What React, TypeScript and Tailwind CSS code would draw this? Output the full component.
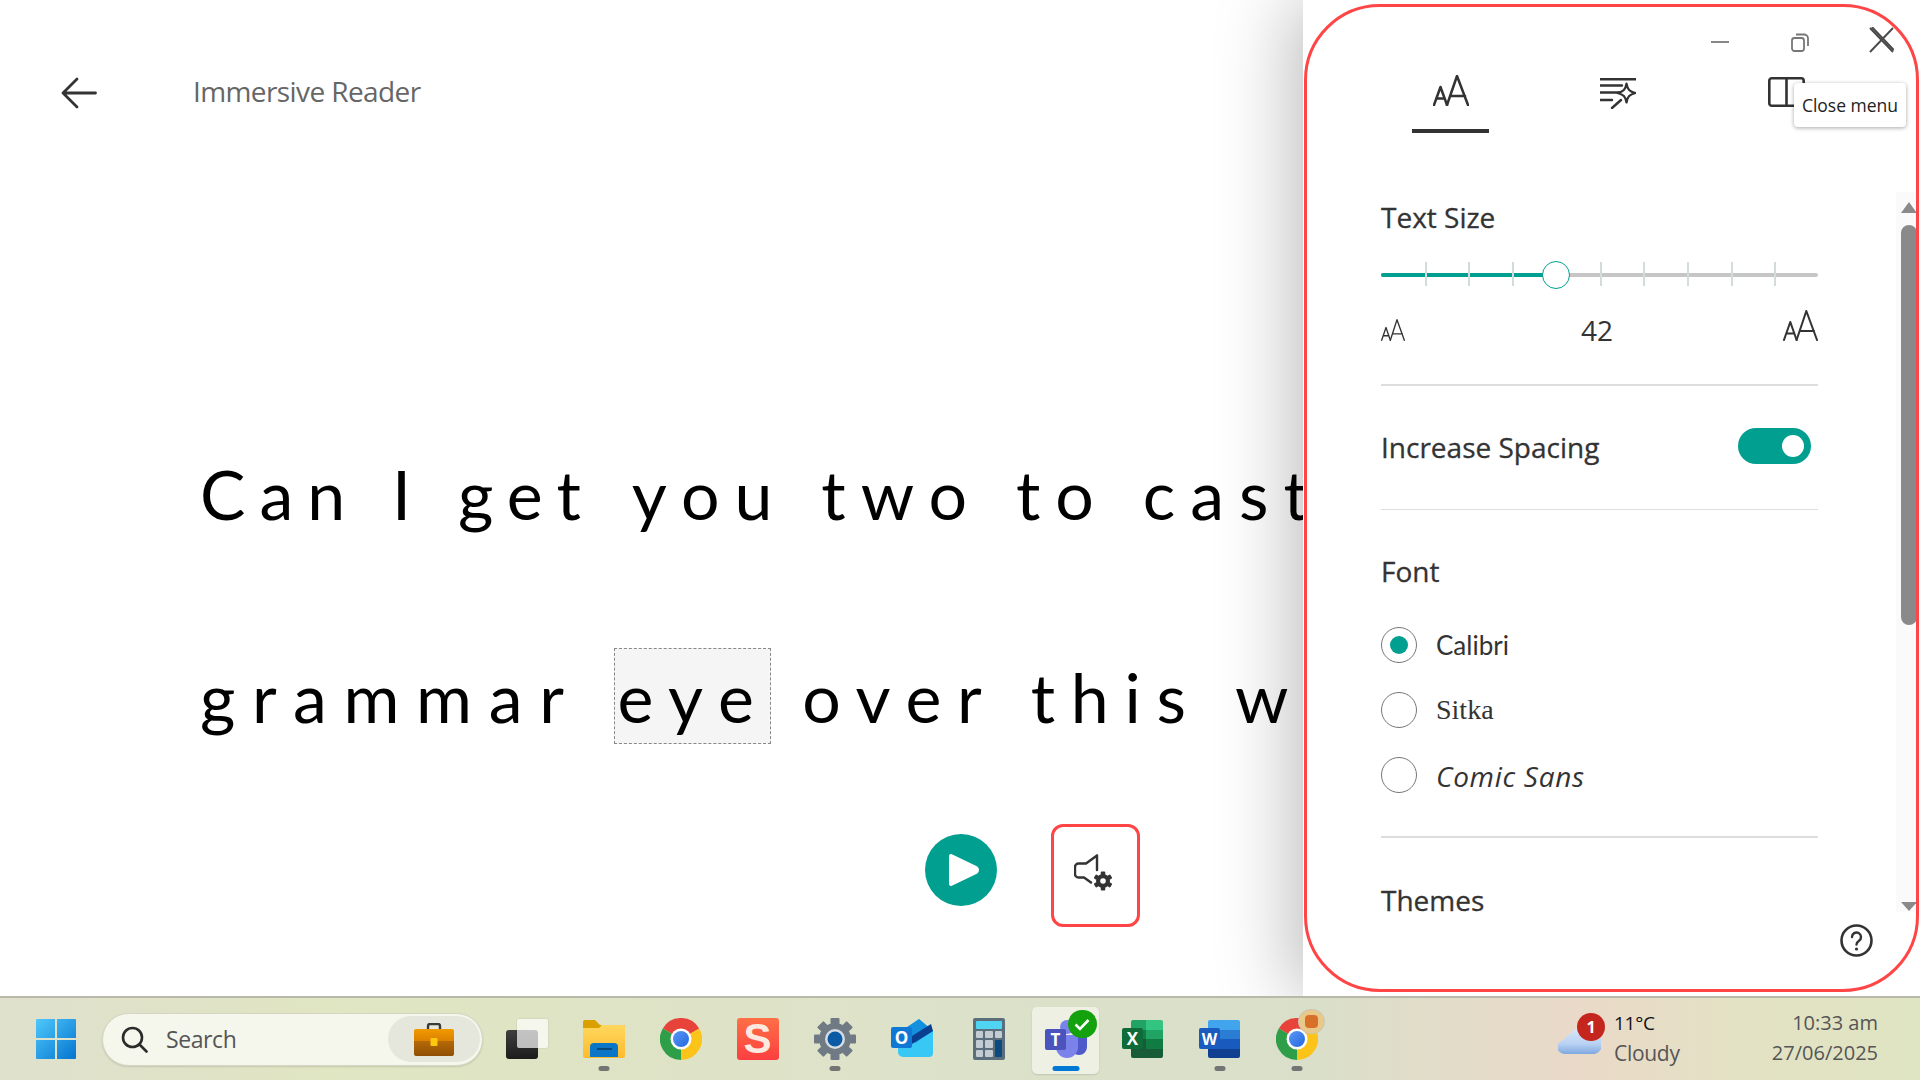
import type { ReactNode } from 'react';

const uiFont = "font-['Open_Sans',sans-serif]";
const heading = 'text-[28px] leading-[36px] font-medium text-[#333] [-webkit-text-stroke:0.3px_#333]';

function AaIcon({ w, h, sw = 2.5, color = '#333' }: { w: number; h: number; sw?: number; color?: string }) {
  return (
    <svg width={w} height={h} viewBox="0 0 36 31" fill="none" stroke={color} strokeWidth={sw} strokeLinecap="round" strokeLinejoin="round" preserveAspectRatio="none">
      <path d="M14 30 24 1l11 29M17.5 21H32" />
      <path d="M1 30 7.5 12 14 30M3.5 23.5H11.5" />
    </svg>
  );
}

function SparkleListIcon() {
  return (
    <svg width="36" height="31" viewBox="0 0 36 31" fill="none" stroke="#333" strokeWidth="2.4" strokeLinecap="round">
      <path d="M0 1.2H36M0 7.5H22M0 14.5H20M0 22H12M12 30 21 22" />
      <path d="M26.5 5.5C27.5 11.5 29.5 13.6 35.5 15 29.5 16.4 27.5 18.5 26.5 24.5 25.5 18.5 23.5 16.4 17.5 15 23.5 13.6 25.5 11.5 26.5 5.5Z" strokeWidth="2.2" strokeLinejoin="round" fill="#fff" />
    </svg>
  );
}

function BookIcon() {
  return (
    <svg width="37" height="30" viewBox="0 0 37 30" fill="none" stroke="#333" strokeWidth="2.6">
      <rect x="1.3" y="1.3" width="34.4" height="27.4" rx="2.5" />
      <path d="M18.5 1.3V28.7" />
    </svg>
  );
}

function Gear({ cx, cy, r, teeth, toothW, toothH, fill }: { cx: number; cy: number; r: number; teeth: number; toothW: number; toothH: number; fill: string }) {
  const angles = Array.from({ length: teeth }, (_, i) => (360 / teeth) * i);
  return (
    <g fill={fill}>
      <circle cx={cx} cy={cy} r={r} />
      {angles.map((a) => (
        <rect key={a} x={cx - toothW / 2} y={cy - r - toothH + 1} width={toothW} height={toothH} rx="1" transform={`rotate(${a} ${cx} ${cy})`} />
      ))}
    </g>
  );
}

function SpeakerGearIcon() {
  return (
    <svg width="40" height="37" viewBox="0 0 40 37" fill="none">
      <path d="M23 1.5V16M23 1.5 12 9.5H4.5a3.5 3.5 0 0 0-3.5 3.5V20a3.5 3.5 0 0 0 3.5 3.5H10L17 28.5" stroke="#333" strokeWidth="2.4" strokeLinecap="round" strokeLinejoin="round" />
      <Gear cx={29} cy={27} r={7} teeth={6} toothW={4.5} toothH={3.5} fill="#333" />
      <circle cx="29" cy="27" r="2.8" fill="#fff" />
    </svg>
  );
}

function WindowsIcon() {
  return (
    <svg width="40" height="40" viewBox="0 0 40 40">
      <defs>
        <linearGradient id="win" x1="0" y1="0" x2="1" y2="1">
          <stop offset="0" stopColor="#4fc8fb" />
          <stop offset="1" stopColor="#0474cf" />
        </linearGradient>
      </defs>
      <path d="M1 0H19V19H0V1a1 1 0 0 1 1-1ZM21 0H39a1 1 0 0 1 1 1V19H21ZM0 21H19V40H1a1 1 0 0 1-1-1ZM21 21H40V39a1 1 0 0 1-1 1H21Z" fill="url(#win)" />
    </svg>
  );
}

function BriefcaseIcon() {
  return (
    <svg width="40" height="33" viewBox="0 0 40 33">
      <defs>
        <linearGradient id="caseTop" x1="0" y1="0" x2="0" y2="1">
          <stop offset="0" stopColor="#f09a00" />
          <stop offset="1" stopColor="#d97c00" />
        </linearGradient>
        <linearGradient id="caseBottom" x1="0" y1="0" x2="0" y2="1">
          <stop offset="0" stopColor="#b66a06" />
          <stop offset="1" stopColor="#8f4f05" />
        </linearGradient>
      </defs>
      <path d="M14 6V3a2 2 0 0 1 2-2h8a2 2 0 0 1 2 2v3" fill="none" stroke="#3a3a3a" strokeWidth="2.4" />
      <rect x="0" y="6" width="40" height="14" rx="2" fill="url(#caseTop)" />
      <path d="M0 18H40V31a2 2 0 0 1-2 2H2a2 2 0 0 1-2-2Z" fill="url(#caseBottom)" />
      <rect x="16.5" y="15" width="7" height="8" rx="1" fill="#fbc80e" />
    </svg>
  );
}

function TaskViewIcon() {
  return (
    <div className="relative w-[42px] h-[40px]">
      <div className="absolute left-0 bottom-0 w-[32px] h-[29px] rounded-[3px] bg-[linear-gradient(180deg,#3f3f3f,#1c1c1c)]" />
      <div className="absolute right-0 top-0 w-[31px] h-[29px] rounded-[2px] bg-[#ffffffb0] shadow-[0_0_2px_rgba(0,0,0,0.15)]" />
    </div>
  );
}

function FolderIcon() {
  return (
    <svg width="42" height="38" viewBox="0 0 42 38">
      <defs>
        <linearGradient id="folder" x1="0" y1="0" x2="0" y2="1">
          <stop offset="0" stopColor="#ffd75e" />
          <stop offset="1" stopColor="#fdbb2d" />
        </linearGradient>
      </defs>
      <path d="M0 2a2 2 0 0 1 2-2H12L17 5H40a2 2 0 0 1 2 2V10H0Z" fill="#d9a000" />
      <path d="M0 8H16L19 5H40a2 2 0 0 1 2 2V36a2 2 0 0 1-2 2H2a2 2 0 0 1-2-2Z" fill="url(#folder)" />
      <path d="M7 38V28a4 4 0 0 1 4-4H31a4 4 0 0 1 4 4V38Z" fill="#0b76c5" transform="translate(0 -1)" />
      <rect x="14" y="28" width="15" height="2" fill="#06487c" />
    </svg>
  );
}

function ChromeIcon({ id }: { id: string }) {
  return (
    <svg width="42" height="42" viewBox="0 0 42 42">
      <defs>
        <linearGradient id={`${id}b`} x1="0" y1="0" x2="1" y2="1">
          <stop offset="0" stopColor="#5a97f5" />
          <stop offset="1" stopColor="#2368e0" />
        </linearGradient>
      </defs>
      <path d="M21 21 2.8 10.5A21 21 0 0 1 39.2 10.5Z" fill="#e8433a" />
      <path d="M21 21 39.2 10.5A21 21 0 0 1 21 42Z" fill="#fcc419" />
      <path d="M21 21 21 42A21 21 0 0 1 2.8 10.5Z" fill="#2f9e48" />
      <circle cx="21" cy="21" r="10.5" fill="#fff" />
      <circle cx="21" cy="21" r="8" fill={`url(#${id}b)`} />
    </svg>
  );
}

function SnagIcon() {
  return (
    <div className="w-[42px] h-[42px] rounded-[3px] bg-[linear-gradient(180deg,#ff6f47,#fb3f3f)] flex items-center justify-center">
      <span className="font-['Liberation_Sans',sans-serif] font-bold text-[42px] leading-none text-[#fde9e0]">S</span>
    </div>
  );
}

function SettingsIcon() {
  return (
    <svg width="42" height="42" viewBox="0 0 42 42">
      <Gear cx={21} cy={21} r={16} teeth={8} toothW={9} toothH={6} fill="#6f7a85" />
      <circle cx="21" cy="21" r="10" fill="#d5dde2" />
      <circle cx="21" cy="21" r="7.5" fill="#0a5aa5" />
    </svg>
  );
}

function OutlookIcon() {
  return (
    <svg width="42" height="40" viewBox="0 0 42 40">
      <path d="M7 20 28 0l14 12v22a4 4 0 0 1-4 4H12a5 5 0 0 1-5-5Z" fill="#38c8f5" />
      <path d="M13 10 28 0 42 12 24 24Z" fill="#1490df" />
      <path d="M21 17 40 5 42 12 21 25Z" fill="#0a3f8f" />
      <rect x="0" y="8" width="21" height="21" rx="2" fill="#0f78d4" />
      <text x="10.5" y="24.5" textAnchor="middle" fontSize="17" fontWeight="700" fill="#fff" fontFamily="Open Sans, sans-serif">O</text>
    </svg>
  );
}

function CalcIcon() {
  const keys = Array.from({ length: 6 }, (_, i) => i);
  return (
    <div className="w-[32px] h-[42px] rounded-[2px] bg-[#5c6d7c] p-[3px] flex flex-col gap-[2px]">
      <div className="h-[8px] bg-[#4fd4f2] rounded-[1px]" />
      <div className="flex-1 flex gap-[2px]">
        <div className="flex-1 grid grid-cols-2 grid-rows-3 gap-[2px]">
          {keys.map((k) => <div key={k} className="bg-[#c4ccd3] rounded-[1px]" />)}
        </div>
        <div className="w-[7px] flex flex-col gap-[2px]">
          <div className="h-[7px] bg-[#c4ccd3] rounded-[1px]" />
          <div className="flex-1 bg-[#0c4a80] rounded-[1px]" />
        </div>
      </div>
    </div>
  );
}

function TeamsIcon() {
  return (
    <svg width="42" height="38" viewBox="0 0 42 38">
      <circle cx="33" cy="9" r="5" fill="#5059c9" />
      <path d="M26 15H42V27a8 8 0 0 1-16 0Z" fill="#5059c9" />
      <circle cx="22" cy="7" r="7" fill="#7b83eb" />
      <path d="M11 15H33V27a11 11 0 0 1-22 0Z" fill="#7b83eb" />
      <rect x="0" y="9" width="21" height="21" rx="2" fill="#4b53bc" />
      <text x="10.5" y="25.5" textAnchor="middle" fontSize="17" fontWeight="700" fill="#fff" fontFamily="Open Sans, sans-serif">T</text>
    </svg>
  );
}

function ExcelIcon() {
  return (
    <svg width="41" height="38" viewBox="0 0 41 38">
      <path d="M9 2a2 2 0 0 1 2-2H24V10H9Z" fill="#21a366" />
      <path d="M24 0H39a2 2 0 0 1 2 2V10H24Z" fill="#33c481" />
      <rect x="9" y="10" width="32" height="9" fill="#107c41" />
      <rect x="24" y="10" width="17" height="9" fill="#21a366" />
      <rect x="9" y="19" width="15" height="10" fill="#185c37" />
      <rect x="24" y="19" width="17" height="10" fill="#107c41" />
      <path d="M9 29H41V36a2 2 0 0 1-2 2H11a2 2 0 0 1-2-2Z" fill="#185c37" />
      <rect x="0" y="8" width="21" height="21" rx="2" fill="#0f6b3a" />
      <text x="10.5" y="24.5" textAnchor="middle" fontSize="17" fontWeight="700" fill="#fff" fontFamily="Open Sans, sans-serif">X</text>
    </svg>
  );
}

function WordIcon() {
  return (
    <svg width="41" height="38" viewBox="0 0 41 38">
      <path d="M9 2a2 2 0 0 1 2-2H39a2 2 0 0 1 2 2V10H9Z" fill="#41a5ee" />
      <rect x="9" y="10" width="32" height="9" fill="#2b7cd3" />
      <rect x="9" y="19" width="32" height="10" fill="#185abd" />
      <path d="M9 29H41V36a2 2 0 0 1-2 2H11a2 2 0 0 1-2-2Z" fill="#103f91" />
      <rect x="0" y="8" width="21" height="21" rx="2" fill="#1a5bbf" />
      <text x="10.5" y="24.5" textAnchor="middle" fontSize="16" fontWeight="700" fill="#fff" fontFamily="Open Sans, sans-serif">W</text>
    </svg>
  );
}

function CloudIcon() {
  return (
    <svg width="43" height="28" viewBox="0 0 43 28">
      <defs>
        <linearGradient id="cloud" x1="0" y1="0" x2="0" y2="1">
          <stop offset="0" stopColor="#d8e6f8" />
          <stop offset="0.6" stopColor="#b9d2f2" />
          <stop offset="1" stopColor="#7fa8e0" />
        </linearGradient>
      </defs>
      <path d="M7 27a7 7 0 0 1-1-14 10 10 0 0 1 6-6 11 11 0 0 1 19 0 9 9 0 0 1 6 20Z" fill="url(#cloud)" />
    </svg>
  );
}

function Slot({ children, dot, active }: { children: ReactNode; dot?: boolean; active?: boolean }) {
  return (
    <div className="relative w-[77px] h-full flex items-center justify-center">
      {active && <div className="absolute left-[5px] top-[9px] w-[67px] h-[67px] rounded-[5px] bg-[#eef0e4] shadow-[0_1px_2px_rgba(0,0,0,0.12)]" />}
      <div className="relative">{children}</div>
      {dot && <div className="absolute left-1/2 -translate-x-1/2 bottom-[9px] w-[11px] h-[5px] rounded-full bg-[#747474]" />}
      {active && <div className="absolute left-1/2 -translate-x-1/2 bottom-[9px] w-[27px] h-[5px] rounded-full bg-[#0078d4]" />}
    </div>
  );
}

function Taskbar() {
  return (
    <div className={`relative z-20 h-[84px] shrink-0 flex items-center border-t-2 border-[#b8b9a8] bg-[linear-gradient(90deg,#dfe0cd_0%,#e0e5c2_17%,#dde2c9_45%,#d9dfc9_68%,#ead9c8_82%,#e3e2c4_91%,#dfe4c2_100%)] ${uiFont}`}>
      <div className="ml-[36px] shrink-0"><WindowsIcon /></div>
      <div className="ml-[26px] w-[381px] h-[53px] shrink-0 rounded-full bg-[#f5f6ec] border border-[#d4d6c3] flex items-center pl-[18px] pr-[2px] shadow-[0_1px_2px_rgba(0,0,0,0.12)]">
        <svg width="27" height="27" viewBox="0 0 27 27" fill="none" stroke="#2b2b2b" strokeWidth="2.6" strokeLinecap="round">
          <circle cx="11.5" cy="11.5" r="9.5" />
          <path d="M18.5 18.5 25.5 25.5" />
        </svg>
        <span className="ml-[18px] text-[23px] leading-none text-[#555] tracking-[-0.4px]">Search</span>
        <div className="ml-auto w-[92px] h-[46px] rounded-full bg-[#e6e7dc] flex items-center justify-center"><BriefcaseIcon /></div>
      </div>
      <div className="ml-[5px] h-full flex">
        <Slot><TaskViewIcon /></Slot>
        <Slot dot><FolderIcon /></Slot>
        <Slot><ChromeIcon id="c1" /></Slot>
        <Slot><SnagIcon /></Slot>
        <Slot dot><SettingsIcon /></Slot>
        <Slot><OutlookIcon /></Slot>
        <Slot><CalcIcon /></Slot>
        <Slot active>
          <TeamsIcon />
          <div className="absolute right-[-10px] top-[-10px] w-[29px] h-[28px] rounded-full bg-[#13a10e] flex items-center justify-center">
            <svg width="16" height="13" viewBox="0 0 16 13" fill="none" stroke="#fff" strokeWidth="2.6"><path d="M1.5 6.5 6 11 14.5 2" /></svg>
          </div>
        </Slot>
        <Slot><ExcelIcon /></Slot>
        <Slot dot><WordIcon /></Slot>
        <Slot dot>
          <ChromeIcon id="c2" />
          <div className="absolute right-[-7px] top-[-9px] w-[27px] h-[25px] rounded-full bg-[#e9c98a] border border-[#c7c7b8] flex items-center justify-center">
            <div className="w-[13px] h-[13px] rounded-[4px] bg-[#d9702a]" />
          </div>
        </Slot>
      </div>
      <div className="relative ml-[223px] shrink-0 mt-[4px]">
        <CloudIcon />
        <div className="absolute left-[19px] top-[-14px] w-[28px] h-[28px] rounded-full bg-[#c4261d] flex items-center justify-center font-bold text-[16px] leading-none text-white">1</div>
      </div>
      <div className="ml-[13px] mb-[2px] flex flex-col gap-[2px]">
        <span className="text-[19px] leading-[28px] text-[#111] tracking-[-0.3px]">11°C</span>
        <span className="text-[21px] leading-[28px] text-[#555] tracking-[-0.3px]">Cloudy</span>
      </div>
      <div className="ml-auto mr-[42px] mb-[2px] flex flex-col items-end gap-[2px]">
        <span className="text-[20px] leading-[28px] text-[#555]">10:33 am</span>
        <span className="text-[20px] leading-[28px] text-[#555]">27/06/2025</span>
      </div>
    </div>
  );
}

function Radio({ checked, label, labelClass }: { checked?: boolean; label: string; labelClass: string }) {
  return (
    <div className="h-[65px] flex items-center">
      <div className="w-[36px] h-[36px] rounded-full border border-[#777] flex items-center justify-center">
        {checked && <div className="w-[18px] h-[18px] rounded-full bg-[#009f90]" />}
      </div>
      <span className={`ml-[19px] text-[#333] ${labelClass}`}>{label}</span>
    </div>
  );
}

function Slider() {
  const ticks = [1, 2, 3, 5, 6, 7, 8, 9];
  return (
    <div className="relative h-[28px]">
      <div className="absolute inset-x-0 top-[12px] h-[4px] rounded-full bg-[#c6c6c6]" />
      <div className="absolute left-0 top-[12px] h-[4px] w-[175px] rounded-l-full bg-[#009f90]" />
      {ticks.map((t) => (
        <div key={t} className="absolute top-[1px] w-[2px] h-[24px] bg-[#d3dbdb]" style={{ left: Math.round(t * 43.7) }} />
      ))}
      <div className="absolute left-[161px] top-0 w-[28px] h-[28px] rounded-full bg-white border border-[#009f90]" />
    </div>
  );
}

function SettingsPanel() {
  return (
    <div className={`relative z-10 w-[617px] shrink-0 bg-white shadow-[-12px_0_70px_rgba(0,0,0,0.26)] pl-[1px] pt-[4px] ${uiFont}`}>
      <div className="relative w-[615px] h-[988px] rounded-[76px] border-[3px] border-[#ff4545] overflow-hidden">
        <div className="h-[20px]" />
        <div className="flex justify-end items-center h-[26px] pr-[22px]">
          <div className="w-[18px] h-[2px] bg-[#888] mr-[62px] mt-[4px]" />
          <svg width="18" height="19" viewBox="0 0 18 19" fill="none" stroke="#777" strokeWidth="1.8" className="mr-[60px] mt-[4px]">
            <rect x="1" y="5" width="12" height="13" rx="2.5" />
            <path d="M5 1.5H13a4 4 0 0 1 4 4V13" />
          </svg>
          <svg width="25" height="26" viewBox="0 0 25 26" fill="none" stroke="#4a4a4a" strokeWidth="1.9">
            <path d="M1 1 24 25M3 0 25 23M24 1 1 25" />
          </svg>
        </div>
        <div className="mt-[22px] pl-[105px] flex gap-[90px] h-[58px]">
          <div className="w-[77px] flex flex-col items-center justify-between">
            <AaIcon w={36} h={31} />
            <div className="w-[77px] h-[4px] bg-[#333]" />
          </div>
          <div className="w-[77px] flex justify-center pt-[3px]"><div><SparkleListIcon /></div></div>
          <div className="w-[77px] flex justify-center pt-[2px] pl-[4px]"><div><BookIcon /></div></div>
        </div>
        <div className="pl-[74px] w-[511px]">
          <div className={`mt-[66px] h-[36px] ${heading}`}>Text Size</div>
          <div className="mt-[26px]"><Slider /></div>
          <div className="mt-[21px] h-[32px] flex items-end justify-between">
            <div className="mb-[1px]"><AaIcon w={24} h={22} sw={2} /></div>
            <span className="text-[28px] leading-[32px] text-[#333] ml-[6px] mb-[-4px]">42</span>
            <div className="mb-[1px]"><AaIcon w={35} h={31} sw={2.1} /></div>
          </div>
          <div className="mt-[42px] h-[1.5px] bg-[#ddd]" />
          <div className="h-[123px] flex items-center justify-between pr-[7px]">
            <span className={heading}>Increase Spacing</span>
            <div className="w-[73px] h-[36px] rounded-full bg-[#009f90] flex items-center justify-end pr-[7px] mb-[2px]">
              <div className="w-[22px] h-[22px] rounded-full bg-white" />
            </div>
          </div>
          <div className="h-[1.5px] bg-[#ddd]" />
          <div className={`mt-[43px] h-[36px] ${heading}`}>Font</div>
          <div className="mt-[23px]">
            <Radio checked label="Calibri" labelClass="font-['Lato',sans-serif] text-[26px] mt-[2px]" />
            <Radio label="Sitka" labelClass="font-['Liberation_Serif',serif] text-[28px]" />
            <Radio label="Comic Sans" labelClass="font-['Open_Sans',sans-serif] italic text-[28px] tracking-[0.7px] mt-[3px]" />
          </div>
          <div className="mt-[29px] h-[1.5px] bg-[#ddd]" />
          <div className={`mt-[44px] h-[36px] ${heading}`}>Themes</div>
        </div>
        <div className="absolute left-[589px] top-[185px] bottom-[77px] w-[21px] bg-[#fafafa]" />
        <div className="absolute right-[-1px] top-[195px] w-0 h-0 border-x-[8px] border-x-transparent border-b-[11px] border-b-[#8a8a8a]" />
        <div className="absolute right-[-1px] top-[218px] w-[16px] h-[400px] rounded-[8px] bg-[#8a8a8a]" />
        <div className="absolute right-[-1px] top-[895px] w-0 h-0 border-x-[8px] border-x-transparent border-t-[9px] border-t-[#8a8a8a]" />
        <svg width="33" height="33" viewBox="0 0 33 33" fill="none" className="absolute left-[533px] top-[917px]">
          <circle cx="16.5" cy="16.5" r="15" stroke="#333" strokeWidth="2.6" />
          <path d="M12 13a4.5 4.5 0 1 1 7 3.7c-1.6 1.1-2.5 1.9-2.5 3.8" stroke="#333" strokeWidth="2.4" strokeLinecap="round" />
          <circle cx="16.5" cy="25" r="1.6" fill="#333" />
        </svg>
      </div>
      <div className="absolute left-[491px] top-[83px] w-[112px] h-[44px] rounded-[4px] bg-white shadow-[0_1px_4px_rgba(0,0,0,0.35)] flex items-center justify-center text-[17.5px] text-[#222] whitespace-nowrap">Close menu</div>
    </div>
  );
}

function Reader() {
  return (
    <div className="relative flex-1 min-w-0 bg-white overflow-hidden">
      <div className="flex items-center h-[32px] mt-[77px] pl-[61px]">
        <svg width="36" height="32" viewBox="0 0 36 32" fill="none" stroke="#333" strokeWidth="2.8" strokeLinecap="round" strokeLinejoin="round">
          <path d="M34.5 16H2M16 2 2 16 16 30" />
        </svg>
        <span className={`ml-[96px] mb-[4px] text-[28px] leading-[32px] text-[#666] tracking-[-0.6px] ${uiFont}`}>Immersive Reader</span>
      </div>
      <div className="mt-[337px] pl-[200px] whitespace-nowrap font-['Lato',sans-serif] text-[68px] leading-[96px] text-black [word-spacing:1.5px]">
        <span className="tracking-[14px]">Can I get </span>
        <span className="tracking-[15px] ml-[4px]">you two to cast a</span>
      </div>
      <div className="mt-[107px] pl-[200px] whitespace-nowrap font-['Lato',sans-serif] text-[68px] leading-[96px] text-black tracking-[15.7px] [word-spacing:1.6px]">
        <span className="tracking-[16.7px]">grammar</span>{' '}
        <span className="bg-[#f5f5f5] border border-dashed border-[#888] pt-[7px] pb-[6px] pl-[2px] ml-[-1px] mr-[-3px]">eye</span>{' '}
        over this w<span className="ml-[14px]">ork</span>
      </div>
      <div className="mt-[79px] ml-[925px] flex items-start">
        <div className="w-[72px] h-[72px] mt-[10px] rounded-full bg-[#009f90] flex items-center justify-center">
          <svg width="32" height="36" viewBox="0 0 32 36" className="ml-[5px]">
            <path d="M3 4 28 16a2.5 2.5 0 0 1 0 4L3 32Z" fill="#fff" stroke="#fff" strokeWidth="4" strokeLinejoin="round" />
          </svg>
        </div>
        <div className="ml-[54px] w-[89px] h-[103px] rounded-[12px] border-[3px] border-[#ff4545] flex justify-center pt-[27px] pr-[4px]">
          <div><SpeakerGearIcon /></div>
        </div>
      </div>
    </div>
  );
}

export default function App() {
  return (
    <div className="w-[1920px] h-[1080px] flex flex-col overflow-hidden bg-white">
      <div className="flex-1 min-h-0 flex overflow-hidden">
        <Reader />
        <SettingsPanel />
      </div>
      <Taskbar />
    </div>
  );
}
